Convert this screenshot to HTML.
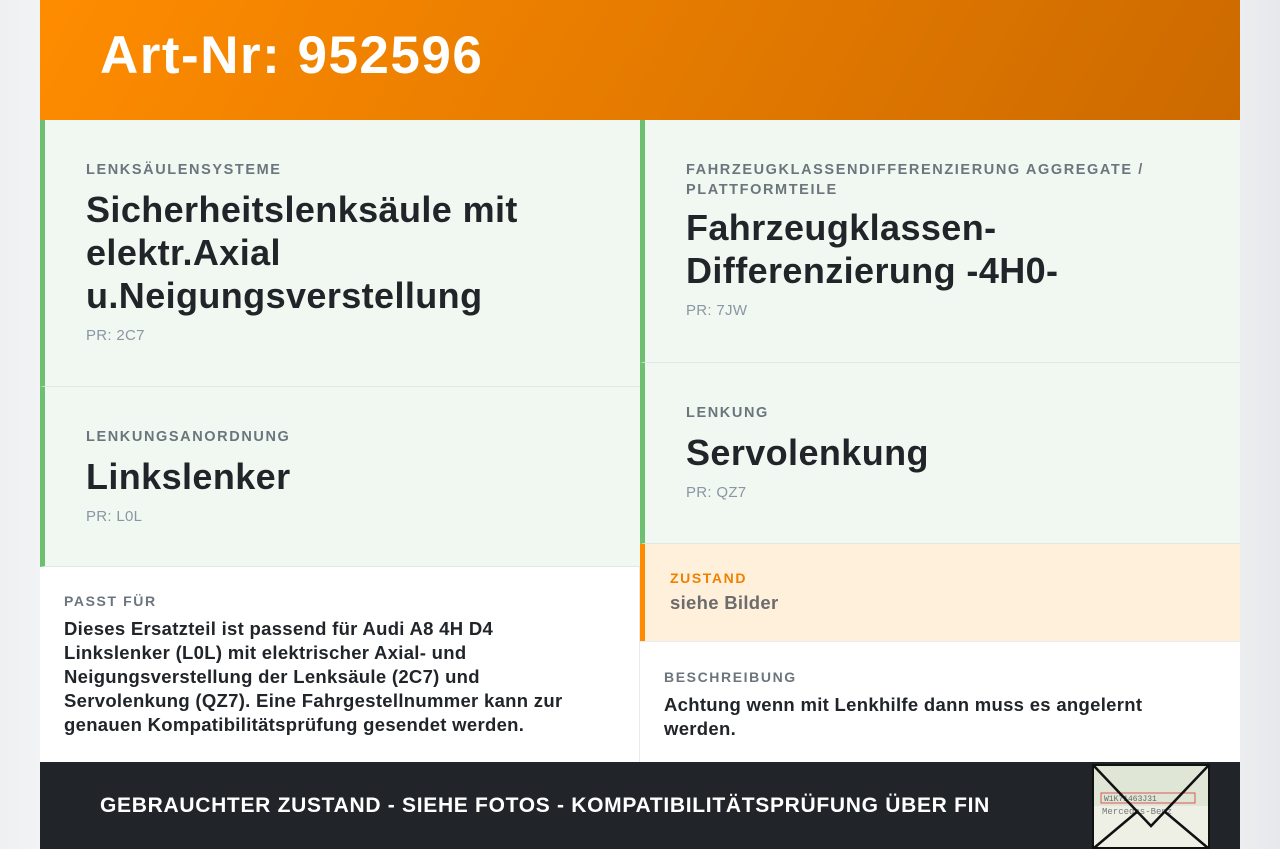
<!DOCTYPE html>
<html><head><meta charset="utf-8"><style>
*{box-sizing:border-box;margin:0;padding:0}
body{width:1280px;height:849px;overflow:hidden;background:linear-gradient(90deg,#eef0f2,#f8f9fa 10%,#f8f9fa 90%,#e6e8eb);font-family:"Liberation Sans",sans-serif;color:#212529}
.wrap{position:absolute;left:40px;top:0;width:1200px;height:849px;background:#fff}
.hdr{position:absolute;left:0;top:0;width:1200px;height:120px;background:linear-gradient(120deg,#ff8c00,#cc6a00)}
.hdr h1{position:absolute;left:60px;top:25px;font-size:53px;font-weight:bold;color:#fff;letter-spacing:1.5px}
.cell{position:absolute;background:#f1f8f1;border-left:5px solid #6cc070;padding-left:41px;border-bottom:1px solid #e3e8e3}
.lbl{font-size:14.5px;font-weight:bold;color:#6c757d;letter-spacing:1.6px;line-height:20px}
.ttl{font-size:36px;font-weight:bold;line-height:43px;color:#212529;margin-top:8px;letter-spacing:0.4px}
.pr{font-size:15px;color:#8a96a3;margin-top:10px;letter-spacing:0.3px}
.info{position:absolute;padding-left:24px}
.info .lbl{font-size:14px}
.txt{font-size:18.5px;font-weight:bold;line-height:24px;color:#212529;margin-top:6px;letter-spacing:0.3px}
.ftr{position:absolute;left:0;top:762px;width:1200px;height:87px;background:#212529}
.ftr span{position:absolute;left:60px;top:32px;font-size:21px;font-weight:bold;color:#fff;letter-spacing:0.7px}
</style></head><body>
<div class="wrap">
<div class="hdr"><h1>Art-Nr: 952596</h1></div>
<div class="cell" style="left:0;top:120px;width:600px;height:267px;padding-top:40px">
<div class="lbl">LENKSÄULENSYSTEME</div>
<div class="ttl">Sicherheitslenksäule mit elektr.Axial u.Neigungsverstellung</div>
<div class="pr">PR: 2C7</div></div>
<div class="cell" style="left:0;top:387px;width:600px;height:180px;padding-top:40px">
<div class="lbl">LENKUNGSANORDNUNG</div>
<div class="ttl">Linkslenker</div>
<div class="pr">PR: L0L</div></div>
<div class="cell" style="left:600px;top:120px;width:600px;height:243px;padding-top:40px">
<div class="lbl">FAHRZEUGKLASSENDIFFERENZIERUNG AGGREGATE / PLATTFORMTEILE</div>
<div class="ttl" style="margin-top:6px">Fahrzeugklassen-<br>Differenzierung -4H0-</div>
<div class="pr">PR: 7JW</div></div>
<div class="cell" style="left:600px;top:363px;width:600px;height:181px;padding-top:40px">
<div class="lbl">LENKUNG</div>
<div class="ttl">Servolenkung</div>
<div class="pr">PR: QZ7</div></div>
<div class="info" style="left:0;top:567px;width:600px;height:195px;padding-top:24px;border-right:1px solid #e9ecef">
<div class="lbl">PASST FÜR</div>
<div class="txt" style="width:535px">Dieses Ersatzteil ist passend für Audi A8 4H D4 Linkslenker (L0L) mit elektrischer Axial- und Neigungsverstellung der Lenksäule (2C7) und Servolenkung (QZ7). Eine Fahrgestellnummer kann zur genauen Kompatibilitätsprüfung gesendet werden.</div></div>
<div style="position:absolute;left:600px;top:544px;width:600px;height:97px;background:#fff0dc;border-left:5px solid #ff8c00;padding:24px 25px">
<div class="lbl" style="color:#f08000;font-size:14px">ZUSTAND</div>
<div style="font-size:18.5px;font-weight:bold;color:#6c6c6c;margin-top:4px;letter-spacing:0.3px">siehe Bilder</div></div>
<div class="info" style="left:600px;top:641px;width:600px;height:121px;padding-top:25px;border-top:1px solid #e9ecef">
<div class="lbl">BESCHREIBUNG</div>
<div class="txt" style="width:520px">Achtung wenn mit Lenkhilfe dann muss es angelernt werden.</div></div>
<div class="ftr"><span>GEBRAUCHTER ZUSTAND - SIEHE FOTOS - KOMPATIBILITÄTSPRÜFUNG ÜBER FIN</span>
<svg style="position:absolute;left:1052px;top:2px" width="118" height="85" viewBox="0 0 118 85">
<rect x="1" y="1" width="116" height="83" fill="#eef0e6" stroke="#111" stroke-width="2"/>
<rect x="2" y="2" width="114" height="40" fill="#dfe6d6"/>
<rect x="9" y="29" width="94" height="10" fill="none" stroke="#d55" stroke-width="1"/>
<text x="12" y="37" font-size="8" font-family="Liberation Mono" fill="#666">W1K71463J31</text>
<text x="10" y="50" font-size="9" font-family="Liberation Mono" fill="#777">Mercedes-Benz</text>
<path d="M2 2 L59 62 L116 2 M2 84 L46 47 M116 84 L72 47" fill="none" stroke="#111" stroke-width="2.5"/>
</svg></div>
</div>
</body></html>
